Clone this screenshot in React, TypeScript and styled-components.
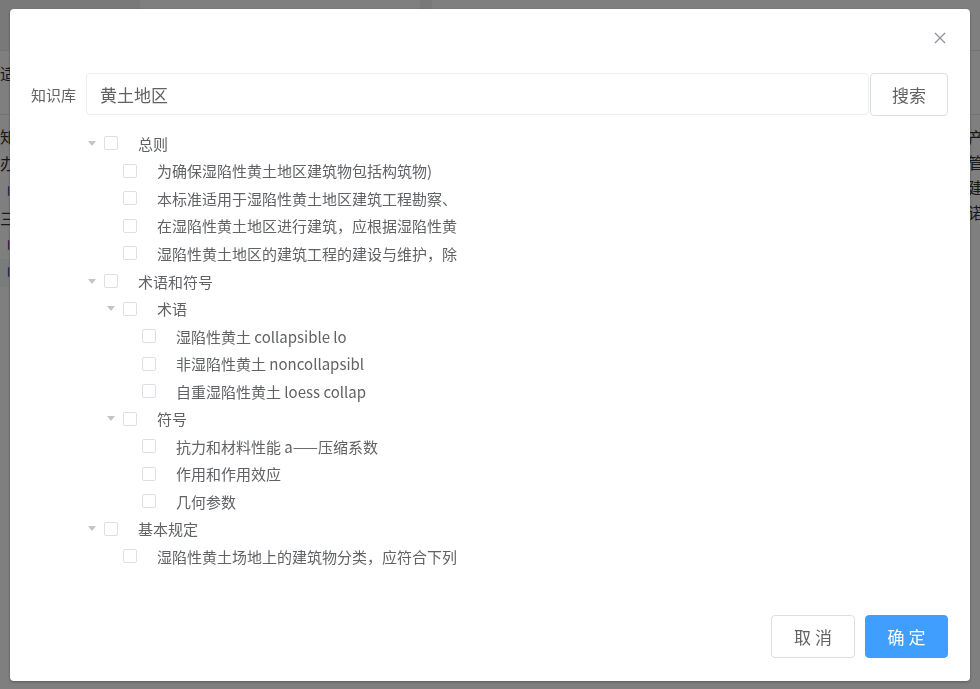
import React from 'react';
import styled, { createGlobalStyle } from 'styled-components';

const GlobalStyle = createGlobalStyle`
  html, body {
    margin: 0;
    padding: 0;
    height: 100%;
    overflow: hidden;
  }
  body {
    font-family: "Noto Sans CJK SC", "Noto Sans", sans-serif;
    background: #fff;
    color: #303133;
  }
`;

/* page behind the dialog */
const Page = styled.div`
  width: 980px;
  height: 689px;
  background: #fff;
  overflow: hidden;
`;

const PageTop = styled.div`
  height: 50px;
  border-bottom: 1px solid #e8e8e8;
  display: flex;
`;

const TopTab = styled.div<{ $w: number; $shade?: boolean }>`
  width: ${(p) => p.$w}px;
  background: ${(p) => (p.$shade ? '#f2f2f2' : '#fff')};
`;

const PageToolbar = styled.div`
  height: 64px;
  border-bottom: 1px solid #e8e8e8;
  padding: 11px 0 0 0;
  box-sizing: border-box;
  font-size: 16px;
  line-height: 22px;
  color: #333;
`;

const PageTable = styled.div`
  display: flex;
  justify-content: space-between;
`;

const LeftCol = styled.div`
  width: 40px;
  padding-top: 8px;
`;

const LeftCell = styled.div<{ $link?: boolean; $shade?: boolean }>`
  height: 27.3px;
  font-size: 16px;
  line-height: 27px;
  color: ${(p) => (p.$link ? '#4a2d8a' : '#333')};
  background: ${(p) => (p.$shade ? '#f5f7fa' : 'transparent')};
`;

const RightCol = styled.div`
  width: 12px;
  padding-top: 10px;
  font-size: 16px;
  line-height: 25px;
  color: #333;
  overflow: hidden;
`;

/* dialog */
const Overlay = styled.div`
  position: fixed;
  inset: 0;
  background: rgba(0, 0, 0, 0.5);
  display: flex;
  align-items: center;
  justify-content: center;
`;

const Dialog = styled.div`
  width: 960px;
  height: 672px;
  background: #fff;
  border-radius: 4px;
  box-shadow: 0 1px 3px rgba(0, 0, 0, 0.3);
  display: flex;
  flex-direction: column;
  box-sizing: border-box;
`;

const Header = styled.div`
  height: 58px;
  display: flex;
  align-items: center;
  justify-content: flex-end;
  padding: 0 24px;
  flex-shrink: 0;
`;

const CloseBtn = styled.button`
  border: none;
  background: none;
  padding: 0;
  width: 12px;
  height: 12px;
  display: flex;
  cursor: pointer;
`;

const Body = styled.div`
  flex: 1;
  padding: 6px 22px 0 21px;
`;

const SearchRow = styled.div`
  display: flex;
  align-items: center;
`;

const Label = styled.label`
  width: 55px;
  font-size: 15px;
  color: #606266;
  flex-shrink: 0;
`;

const Input = styled.input`
  flex: 1;
  height: 42px;
  box-sizing: border-box;
  border: 1px solid #ebeef5;
  border-radius: 4px;
  padding: 0 13px;
  font-family: inherit;
  font-size: 17px;
  color: #606266;
  outline: none;
`;

const Button = styled.button<{ $primary?: boolean; $w: number; $spaced?: boolean }>`
  width: ${(p) => p.$w}px;
  height: 43px;
  box-sizing: border-box;
  border-radius: 4px;
  border: 1px solid ${(p) => (p.$primary ? '#409eff' : '#dcdfe6')};
  background: ${(p) => (p.$primary ? '#409eff' : '#fff')};
  color: ${(p) => (p.$primary ? '#fff' : '#606266')};
  font-family: inherit;
  font-size: 17px;
  letter-spacing: ${(p) => (p.$spaced ? '4px' : '0')};
  text-indent: ${(p) => (p.$spaced ? '4px' : '0')};
  cursor: pointer;
  flex-shrink: 0;
`;

const SearchButton = styled(Button)`
  margin-left: 1px;
`;

const Tree = styled.div`
  margin: 14px 0 0 53px;
`;

const Row = styled.div<{ $level: number }>`
  height: 27.55px;
  display: flex;
  align-items: center;
  padding-left: ${(p) => p.$level * 19}px;
`;

const Expand = styled.span<{ $show: boolean }>`
  width: 16px;
  height: 16px;
  display: flex;
  align-items: center;
  justify-content: center;
  &::before {
    content: '';
    display: ${(p) => (p.$show ? 'block' : 'none')};
    border-left: 4px solid transparent;
    border-right: 4px solid transparent;
    border-top: 5px solid #c0c4cc;
  }
`;

const Check = styled.span`
  width: 14px;
  height: 14px;
  box-sizing: border-box;
  border: 1px solid #dcdfe6;
  border-radius: 2px;
  margin-left: 4px;
  background: #fff;
`;

const NodeText = styled.span`
  margin-left: 20px;
  font-size: 15px;
  color: #606266;
  white-space: nowrap;
`;

const Footer = styled.div`
  display: flex;
  justify-content: flex-end;
  gap: 10px;
  padding: 0 22px 23px 0;
`;

type TreeNode = { label: string; children?: TreeNode[] };

const data: TreeNode[] = [
  {
    label: '总则',
    children: [
      { label: '为确保湿陷性黄土地区建筑物包括构筑物)' },
      { label: '本标准适用于湿陷性黄土地区建筑工程勘察、' },
      { label: '在湿陷性黄土地区进行建筑，应根据湿陷性黄' },
      { label: '湿陷性黄土地区的建筑工程的建设与维护，除' },
    ],
  },
  {
    label: '术语和符号',
    children: [
      {
        label: '术语',
        children: [
          { label: '湿陷性黄土 collapsible lo' },
          { label: '非湿陷性黄土 noncollapsibl' },
          { label: '自重湿陷性黄土 loess collap' },
        ],
      },
      {
        label: '符号',
        children: [
          { label: '抗力和材料性能 a——压缩系数' },
          { label: '作用和作用效应' },
          { label: '几何参数' },
        ],
      },
    ],
  },
  {
    label: '基本规定',
    children: [{ label: '湿陷性黄土场地上的建筑物分类，应符合下列' }],
  },
];

function flatten(nodes: TreeNode[], level = 0): { node: TreeNode; level: number }[] {
  return nodes.flatMap((n) => [{ node: n, level }, ...(n.children ? flatten(n.children, level + 1) : [])]);
}

const leftCells = [
  { t: '知', link: false },
  { t: '办', link: false },
  { t: '刂', link: true },
  { t: '三', link: false },
  { t: '刂', link: true },
  { t: '刂', link: true, shade: true },
];

export default function App() {
  const rows = flatten(data);
  return (
    <>
      <GlobalStyle />
      <Page>
        <PageTop>
          <TopTab $w={140} $shade />
          <TopTab $w={280} />
          <TopTab $w={12} $shade />
        </PageTop>
        <PageToolbar>适</PageToolbar>
        <PageTable>
          <LeftCol>
            {leftCells.map((c, i) => (
              <LeftCell key={i} $link={c.link} $shade={c.shade}>
                {c.t}
              </LeftCell>
            ))}
          </LeftCol>
          <RightCol>
            产<br />
            管<br />
            建<br />
            诺
          </RightCol>
        </PageTable>
      </Page>

      <Overlay>
        <Dialog>
          <Header>
            <CloseBtn aria-label="关闭">
              <svg width="12" height="12" viewBox="0 0 12 12">
                <path d="M1 1 L11 11 M11 1 L1 11" stroke="#909399" strokeWidth="1.3" />
              </svg>
            </CloseBtn>
          </Header>
          <Body>
            <SearchRow>
              <Label>知识库</Label>
              <Input defaultValue="黄土地区" />
              <SearchButton $w={78}>搜索</SearchButton>
            </SearchRow>
            <Tree>
              {rows.map(({ node, level }, i) => (
                <Row key={i} $level={level}>
                  <Expand $show={!!node.children} />
                  <Check />
                  <NodeText>{node.label}</NodeText>
                </Row>
              ))}
            </Tree>
          </Body>
          <Footer>
            <Button $w={84} $spaced>取消</Button>
            <Button $w={83} $primary $spaced>确定</Button>
          </Footer>
        </Dialog>
      </Overlay>
    </>
  );
}
